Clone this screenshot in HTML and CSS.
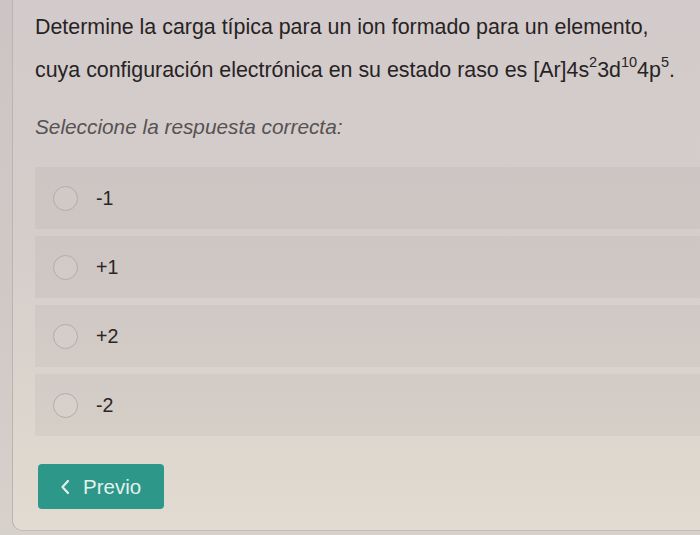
FILE: index.html
```html
<!DOCTYPE html>
<html lang="es">
<head>
<meta charset="utf-8">
<title>Pregunta</title>
<link rel="stylesheet" href="styles.css">
</head>
<body>
<div class="card">
  <div class="question">
    <p class="qtext">Determine la carga típica para un ion formado para un elemento,<br>cuya configuración electrónica en su estado raso es [Ar]4s<span class="sup">2</span>3d<span class="sup">10</span>4p<span class="sup">5</span>.</p>
    <p class="prompt">Seleccione la respuesta correcta:</p>
  </div>
  <div class="options">
    <label class="option"><span class="radio"></span><span class="label">-1</span></label>
    <label class="option"><span class="radio"></span><span class="label">+1</span></label>
    <label class="option"><span class="radio"></span><span class="label">+2</span></label>
    <label class="option"><span class="radio"></span><span class="label">-2</span></label>
  </div>
  <div class="nav">
    <button class="btn-prev"><svg class="chev" width="10" height="16" viewBox="0 0 10 16"><path d="M8 2 L2.5 8 L8 14" fill="none" stroke="currentColor" stroke-width="2.2" stroke-linecap="round" stroke-linejoin="round"/></svg><span>Previo</span></button>
  </div>
</div>
</body>
</html>
```
FILE: styles.css
```css
html, body {
  margin: 0;
  padding: 0;
}
body {
  width: 700px;
  height: 535px;
  overflow: hidden;
  background: linear-gradient(180deg, #cbc5c5 0%, #cfcac6 60%, #d6d1cb 100%);
  font-family: "Liberation Sans", Arial, sans-serif;
}
.card {
  margin-left: 12px;
  width: 720px;
  height: 531px;
  box-sizing: border-box;
  border-left: 1px solid #b9b3b2;
  border-bottom: 1px solid #c2bcb8;
  border-bottom-left-radius: 10px;
  background: linear-gradient(180deg, #d3cbcb 0%, #d4cdca 45%, #ddd6ce 80%, #e1dbd1 100%);
  padding: 6px 0 0 22px;
}
.question p {
  margin: 0;
}
.qtext {
  font-size: 21.4px;
  line-height: 43px;
  color: #272324;
  white-space: nowrap;
}
.qtext .sup {
  display: inline-block;
  font-size: 14.5px;
  line-height: 14px;
  vertical-align: 10px;
}
.prompt {
  margin-top: 23px !important;
  font-size: 20.8px;
  line-height: 24px;
  font-style: italic;
  color: #575253;
}
.options {
  margin-top: 28px;
  display: flex;
  flex-direction: column;
  gap: 7px;
}
.option {
  display: flex;
  align-items: center;
  height: 62px;
  padding-left: 18px;
  background: rgba(150, 135, 135, 0.10);
}
.radio {
  width: 23px;
  height: 23px;
  border: 1.5px solid #b2acab;
  border-radius: 50%;
  background: rgba(255,255,255,0.08);
}
.label {
  margin-left: 18px;
  font-size: 19.6px;
  color: #2a2627;
}
.nav {
  margin-top: 28px;
  display: flex;
}
.btn-prev {
  margin-left: 3px;
  display: flex;
  align-items: center;
  gap: 13px;
  width: 126px;
  height: 45px;
  padding: 0 0 0 22px;
  border: none;
  border-radius: 4px;
  background: #2d978a;
  color: #e3f1ec;
  font-family: "Liberation Sans", Arial, sans-serif;
  font-size: 20.5px;
}
.chev {
  display: block;
}
```
